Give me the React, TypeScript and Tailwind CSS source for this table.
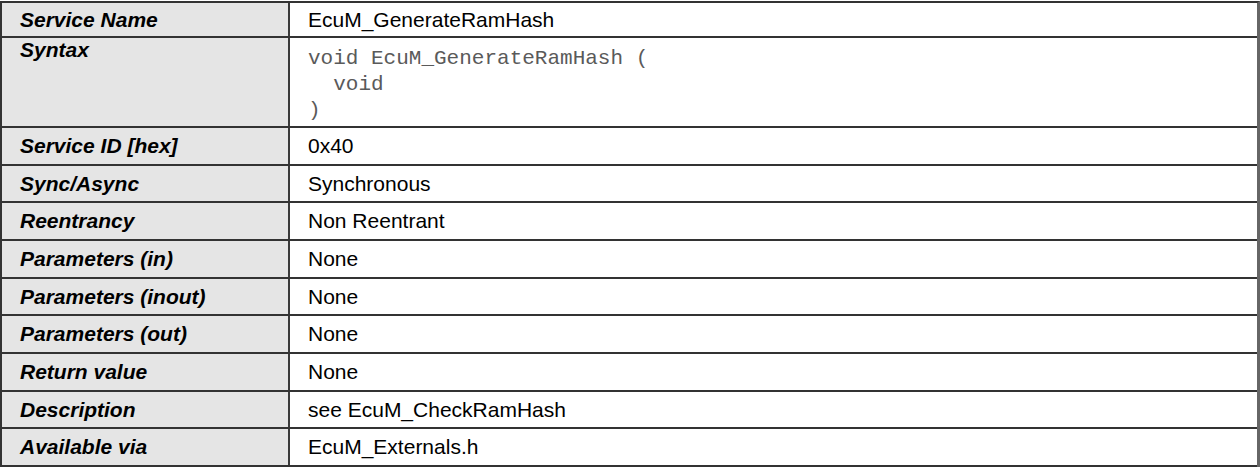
import React from "react";

const rows: [string, React.ReactNode, string][] = [
  ["Service Name", "EcuM_GenerateRamHash", "h-[35px]"],
  [
    "Syntax",
    <div className="font-['Liberation_Mono',monospace] text-[21px] text-[#5a5a5a] leading-[26px] whitespace-pre">
      {"void EcuM_GenerateRamHash (\n  void\n)"}
    </div>,
    "h-[90px]",
  ],
  ["Service ID [hex]", "0x40", "h-[38px]"],
  ["Sync/Async", "Synchronous", "h-[37px]"],
  ["Reentrancy", "Non Reentrant", "h-[38px]"],
  ["Parameters (in)", "None", "h-[38px]"],
  ["Parameters (inout)", "None", "h-[37px]"],
  ["Parameters (out)", "None", "h-[38px]"],
  ["Return value", "None", "h-[38px]"],
  ["Description", "see EcuM_CheckRamHash", "h-[37px]"],
  ["Available via", "EcuM_Externals.h", "h-[38px]"],
];

export default function App() {
  return (
    <div className="w-[1260px] h-[469px] bg-white pt-px font-['Liberation_Sans',Arial,sans-serif] text-[21px] text-black">
      <div className="w-[1260px] flex flex-col border-l-2 border-t-2 border-[#333] border-r-[3px] border-r-[#666]">
        {rows.map(([label, value, h], i) => {
          const syntax = i === 1;
          return (
            <div key={i} className={`grid grid-cols-[288px_1fr] border-b-2 border-[#333] ${h}`}>
              <div
                className={`bg-[#e5e5e5] border-r-2 border-[#3a3a3a] pl-[18px] font-bold italic ${
                  syntax ? "pt-0 leading-[24px]" : "flex items-center"
                }`}
              >
                {label}
              </div>
              <div className={`pl-[18px] ${syntax ? "pt-[8px]" : "flex items-center"}`}>{value}</div>
            </div>
          );
        })}
      </div>
    </div>
  );
}
